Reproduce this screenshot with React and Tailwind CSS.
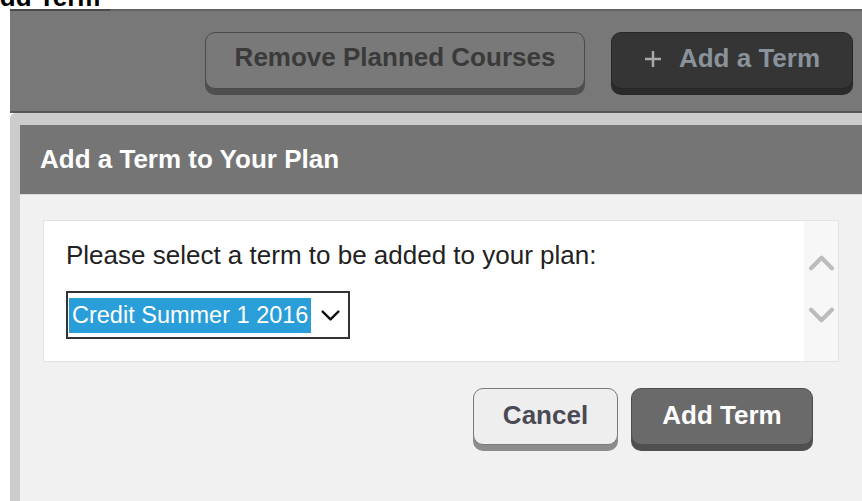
import React from 'react';

const Chevron = ({ dir = 'down', className = '', stroke = '#111', width = 3 }) => (
  <svg viewBox="0 0 24 14" className={className} fill="none">
    <polyline
      points={dir === 'down' ? '2,2 12,12 22,2' : '2,12 12,2 22,12'}
      stroke={stroke}
      strokeWidth={width}
      strokeLinecap="round"
      strokeLinejoin="round"
    />
  </svg>
);

const App = () => {
  return (
    <div className="w-[862px] h-[501px] overflow-hidden bg-white flex flex-col [font-family:'Liberation_Sans',Arial,sans-serif]">
      {/* page heading, scrolled mostly out of view */}
      <div className="h-[9px] overflow-hidden shrink-0">
        <h2 className="mt-[-16px] ml-[-19px] text-[26px] leading-[26px] font-bold text-black whitespace-nowrap">
          Add Term
        </h2>
      </div>

      <div className="ml-[10px] flex-1 flex flex-col">
        {/* toolbar */}
        <div className="flex h-[2px] shrink-0">
          <div className="w-[100px] bg-[#4a4a4a]" />
          <div className="flex-1 bg-[#626262]" />
        </div>
        <div className="h-[100px] shrink-0 bg-[#787878] flex justify-end items-start pt-[21px] pr-[9px] gap-[26px]">
          <button className="w-[380px] h-[57px] rounded-[10px] border border-[#4a4a4a] bg-[#797979] shadow-[0_6px_0_#4f4f4f] text-[26px] font-bold text-[#3a3a3a] pb-[6px]">
            Remove Planned Courses
          </button>
          <button className="w-[242px] h-[57px] rounded-[10px] border border-[#262626] bg-[#353535] shadow-[0_6px_0_#2a2a2a] flex items-center justify-center gap-[17px] pb-[4px]">
            <svg viewBox="0 0 18 18" className="w-[18px] h-[18px]">
              <line x1="9" y1="1" x2="9" y2="17" stroke="#a9a9a9" strokeWidth="2.5" />
              <line x1="1" y1="9" x2="17" y2="9" stroke="#a9a9a9" strokeWidth="2.5" />
            </svg>
            <span className="text-[26px] font-bold text-[#8a929c]">Add a Term</span>
          </button>
        </div>
        <div className="h-[2px] shrink-0 bg-[#565656]" />

        {/* dialog */}
        <div className="flex-1 flex flex-col border-l-[10px] border-t-[12px] border-[#cccccc] rounded-tl-[6px] bg-[#f1f1f1]">
          <div className="h-[70px] shrink-0 bg-[#757575] flex items-center pl-[20px] border-b border-[#dcdcdc]">
            <h3 className="text-[26px] font-bold text-white">Add a Term to Your Plan</h3>
          </div>

          <div className="w-[796px] ml-[23px] mt-[25px] flex flex-col">
            <div className="h-[142px] border border-[#e3e3e3] flex">
              <div className="flex-1 bg-white pl-[22px] pt-[19px]">
                <p className="text-[26px] leading-[30px] text-[#222]">
                  Please select a term to be added to your plan:
                </p>
                <div className="mt-[21px] w-[284px] h-[48px] border-2 border-[#333] flex items-center pl-[1px]">
                  <span className="h-[35px] px-[3px] bg-[#2a9ed9] text-white text-[23.5px] leading-[35px] whitespace-nowrap">
                    Credit Summer 1 2016
                  </span>
                  <Chevron className="ml-[10px] w-[19px] h-[11px]" stroke="#111" width={3} />
                </div>
              </div>
              <div className="w-[34px] bg-[#f7f7f7] flex flex-col items-center pt-[34px]">
                <Chevron dir="up" className="w-[25px] h-[16px]" stroke="#bcbcbc" width={4} />
                <Chevron dir="down" className="mt-[36px] w-[25px] h-[16px]" stroke="#bcbcbc" width={4} />
              </div>
            </div>

            <div className="flex justify-end gap-[13px] pr-[26px] mt-[26px]">
              <button className="w-[145px] h-[57px] rounded-[10px] border border-[#7a7a7a] bg-[#eeeeee] shadow-[0_6px_0_#8c8c8c] text-[26px] font-bold text-[#4a4a55] pb-[3px]">
                Cancel
              </button>
              <button className="w-[182px] h-[57px] rounded-[10px] border border-[#4e4e4e] bg-[#6a6a6a] shadow-[0_6px_0_#505050] text-[26px] font-bold text-white pb-[3px]">
                Add Term
              </button>
            </div>
          </div>
        </div>
      </div>
    </div>
  );
};

export default App;
